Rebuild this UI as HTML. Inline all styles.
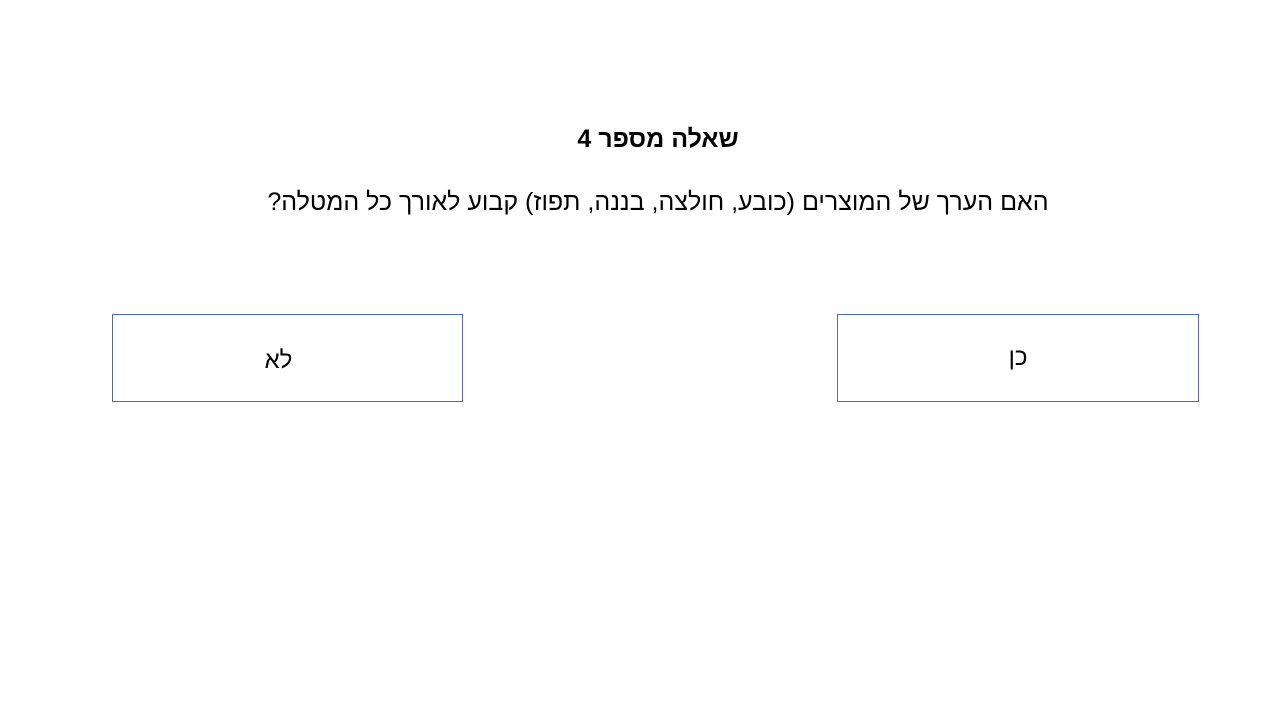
<!DOCTYPE html>
<html><head><meta charset="utf-8"><style>
body{margin:0;width:1280px;height:720px;background:#fff;position:relative;font-family:"Liberation Sans","DejaVu Sans",sans-serif;overflow:hidden}
.t{position:absolute;left:0;width:1280px;text-align:center;direction:rtl;color:#000}
.b{position:absolute;border:1px solid #4a6cb3;box-sizing:border-box;display:flex;align-items:center;justify-content:center;font-size:24px;direction:rtl}
</style></head><body>
<div class="t" style="top:123px;left:18px;font-size:25px;font-weight:bold;line-height:32px">שאלה מספר 4</div>
<div class="t" style="top:186px;left:18px;font-size:25px;line-height:32px">האם הערך של המוצרים (כובע, חולצה, בננה, תפוז) קבוע לאורך כל המטלה?</div>
<div class="b" style="left:112px;top:314px;width:351px;height:88px"><span style="margin-top:6px;margin-right:18px">לא</span></div>
<div class="b" style="left:837px;top:314px;width:362px;height:88px"><span style="margin-top:0px">כן</span></div>
</body></html>
